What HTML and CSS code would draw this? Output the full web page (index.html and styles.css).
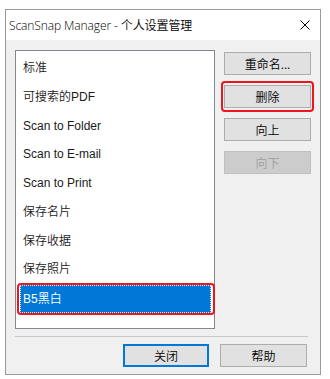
FILE: index.html
```html
<!DOCTYPE html>
<html lang="zh-CN">

<head>
    <meta charset="UTF-8">
    <meta name="viewport" content="width=device-width, initial-scale=1.0">
    <title>ScanSnap Manager - 个人设置管理</title>
    <link rel="stylesheet" href="styles.css">
</head>

<body>
    <div class="window">
        <div class="titlebar">
            <span class="title">ScanSnap Manager - 个人设置管理</span>
            <svg class="close-x" width="10" height="10" viewBox="0 0 10 10">
                <path d="M0.5 0.5 L9.5 9.5 M9.5 0.5 L0.5 9.5" stroke="#000" stroke-width="1" fill="none"/>
            </svg>
        </div>
        <div class="client">
            <div class="main">
                <div class="listbox">
                    <div class="item">标准</div>
                    <div class="item">可搜索的PDF</div>
                    <div class="item">Scan to Folder</div>
                    <div class="item">Scan to E-mail</div>
                    <div class="item">Scan to Print</div>
                    <div class="item">保存名片</div>
                    <div class="item">保存收据</div>
                    <div class="item">保存照片</div>
                    <div class="item selected marked">B5黑白</div>
                </div>
                <div class="side">
                    <button class="btn">重命名...</button>
                    <button class="btn marked">删除</button>
                    <button class="btn">向上</button>
                    <button class="btn" disabled>向下</button>
                </div>
            </div>
            <div class="separator"></div>
            <div class="footer">
                <button class="btn default">关闭</button>
                <button class="btn">帮助</button>
            </div>
        </div>
    </div>
</body>

</html>
```

FILE: styles.css
```css
* {
    box-sizing: border-box;
}
body {
    margin: 0;
    background: #fff;
    font-family: "Liberation Sans", "Noto Sans CJK SC", sans-serif;
    font-size: 12px;
    font-weight: 350;
    color: #000;
}
.window {
    margin: 9px 0 0 5px;
    width: 316px;
    height: 366px;
    border: 1px solid #9a9a9a;
    background: #f0f0f0;
    display: flex;
    flex-direction: column;
}
.titlebar {
    height: 30px;
    background: #fff;
    display: flex;
    align-items: center;
    justify-content: space-between;
    padding: 0 8px 0 3px;
}
.title {
    font-family: "Open Sans", "Noto Sans CJK SC", sans-serif;
    font-size: 12px;
    font-weight: 350;
    letter-spacing: -0.1px;
}
.close-x {
    margin-right: 2px;
}
.client {
    flex: 1;
    padding: 10px 0 0 9px;
}
.main {
    display: flex;
    gap: 9px;
}
.listbox {
    width: 200px;
    height: 279px;
    border: 1px solid #828790;
    background: #fff;
    padding-top: 3px;
}
.item {
    height: 28.75px;
    line-height: 28.75px;
    padding-left: 7px;
    white-space: nowrap;
    color: #1a1a1a;
}
.item.selected {
    margin: 1px 3px 0 4px;
    height: 28px;
    line-height: 27px;
    padding-left: 2px;
    background: #0078d7;
    color: #fff;
    border: 1px dotted #d8e6f5;
}
.side {
    display: flex;
    flex-direction: column;
    gap: 10px;
    padding-top: 2px;
}
.btn {
    position: relative;
    width: 87px;
    height: 23px;
    padding: 0;
    border: 1px solid #adadad;
    background: #e1e1e1;
    font-family: "Noto Sans CJK SC", sans-serif;
    font-size: 12px;
    font-weight: 350;
    color: #000;
}
.btn:disabled {
    background: #cccccc;
    border-color: #bfbfbf;
    color: #a0a0a0;
}
.btn.default {
    width: 86px;
    border: 1px solid #0078d7;
    box-shadow: inset 0 0 0 1px #0078d7;
}
.marked {
    position: relative;
}
.marked::after {
    content: "";
    position: absolute;
    top: -5px;
    bottom: -5px;
    left: -4px;
    right: -4px;
    border: 2px solid #f0141c;
    border-radius: 4px;
}
.item.marked::after {
    top: -3px;
    bottom: -3px;
    left: -4px;
    right: -5px;
}
.separator {
    margin: 7px 12px 0 0;
    height: 1px;
    background: #c8c8c8;
}
.footer {
    display: flex;
    justify-content: flex-end;
    gap: 11px;
    padding: 7px 13px 0 0;
}
```
